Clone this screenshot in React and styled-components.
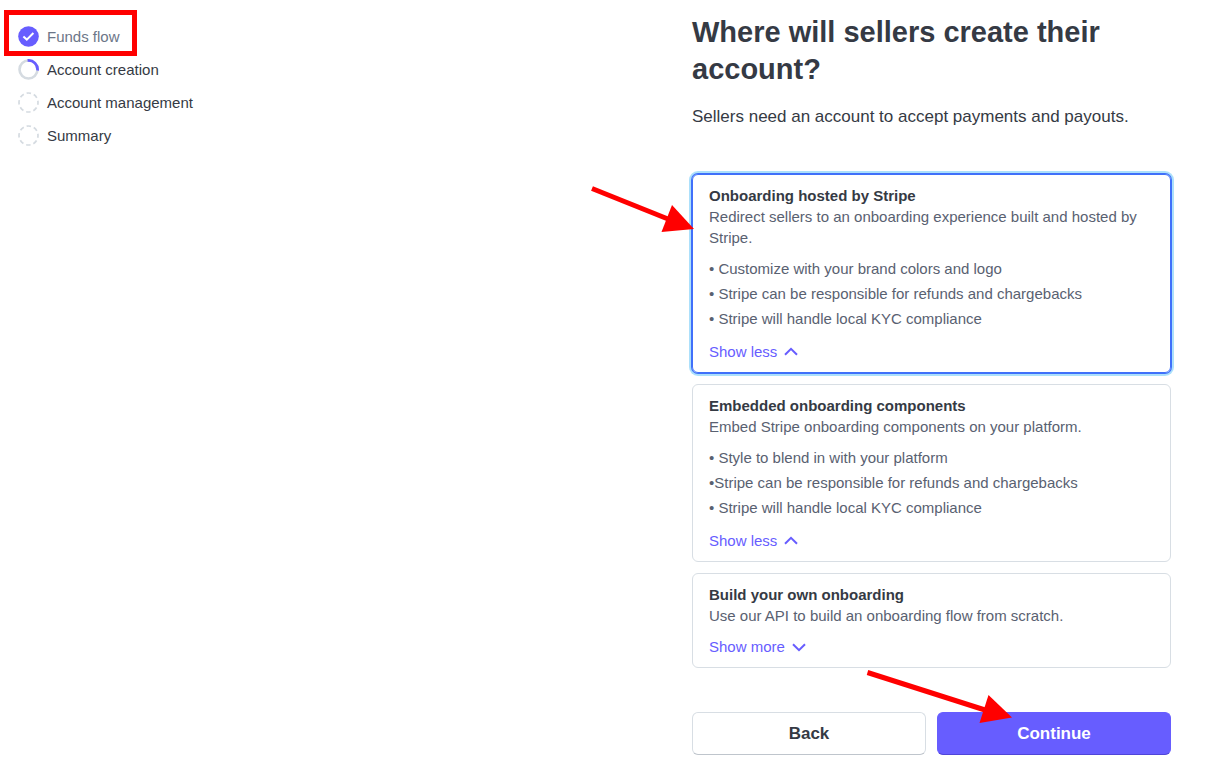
import { useState } from 'react';
import styled, { createGlobalStyle, css } from 'styled-components';

const steps = [
    {label: "Funds flow", status: "done"},
    {label: "Account creation", status: "current"},
    {label: "Account management", status: "todo"},
    {label: "Summary", status: "todo"},
];

const options = [
    {
        id: "hosted",
        title: "Onboarding hosted by Stripe",
        description: "Redirect sellers to an onboarding experience built and hosted by Stripe.",
        bullets: ["• Customize with your brand colors and logo", "• Stripe can be responsible for refunds and chargebacks", "• Stripe will handle local KYC compliance"],
    },
    {
        id: "embedded",
        title: "Embedded onboarding components",
        description: "Embed Stripe onboarding components on your platform.",
        bullets: ["• Style to blend in with your platform", "•Stripe can be responsible for refunds and chargebacks", "• Stripe will handle local KYC compliance"],
    },
    {
        id: "custom",
        title: "Build your own onboarding",
        description: "Use our API to build an onboarding flow from scratch.",
        bullets: ["• Full control over the onboarding experience"],
    },
];

function StepIcon({ status }) {
    if(status === "done"){
        return (
            <Icon viewBox="0 0 21 21" aria-hidden="true">
                <circle cx="10.5" cy="10.5" r="10.3" fill="#675dff" />
                <path d="M5.4 10.4 L8.8 13.6 L15.4 7" fill="none" stroke="white" strokeWidth="2" />
            </Icon>
        )
    }
    if(status === "current"){
        return (
            <Icon viewBox="0 0 21 21" aria-hidden="true">
                <circle cx="10.5" cy="10.5" r="9" fill="none" stroke="#d5dbe1" strokeWidth="2.6" />
                <path d="M9.6 1.5 A9 9 0 0 1 19.5 11.5" fill="none" stroke="#675dff" strokeWidth="2.8" />
            </Icon>
        )
    }
    return (
        <Icon viewBox="0 0 21 21" aria-hidden="true">
            <circle cx="10.5" cy="10.5" r="9.5" fill="none" stroke="#d5dbe1" strokeWidth="1.7" strokeDasharray="4.46 3" strokeDashoffset="2.2" />
        </Icon>
    )
}

function OptionCard({ option, selected, expanded, onSelect, onToggle, children }) {
    return (
        <Card $selected={selected}>
            <Radio
                type="radio"
                name="onboarding"
                id={option.id}
                checked={selected}
                onChange={onSelect}
            />
            <label htmlFor={option.id}>
                <CardTitle>{option.title}</CardTitle>
                <CardText>{option.description}</CardText>
            </label>
            {expanded &&
                <Bullets>
                    {option.bullets.map(text => <li key={text}>{text}</li>)}
                </Bullets>
            }
            <Toggle type="button" aria-expanded={expanded} onClick={onToggle}>
                {expanded ? "Show less" : "Show more"}
                <Chevron viewBox="0 0 14 14" aria-hidden="true">
                    <path d={expanded ? "M1 9.8 L7 3.8 L13 9.8" : "M1 4.2 L7 10.2 L13 4.2"} />
                </Chevron>
            </Toggle>
            {children}
        </Card>
    )
}

export default function App() {
    const [ selected, setSelected ] = useState("hosted");
    const [ expanded, setExpanded ] = useState(["hosted", "embedded"]);

    function toggle(id) {
        if(expanded.includes(id)){
            setExpanded(expanded.filter((item) => item !== id));
        }else{
            setExpanded([...expanded, id]);
        }
    }

    return (
        <>
            <GlobalStyle />
            <Page>
                <Steps>
                    {steps.map(step => (
                        <Step key={step.label} $done={step.status === "done"}>
                            <StepIcon status={step.status} />
                            {step.label}
                            {step.status === "done" && <Highlight />}
                        </Step>
                    ))}
                </Steps>
                <main>
                    <Title>Where will sellers create their account?</Title>
                    <Subtitle>Sellers need an account to accept payments and payouts.</Subtitle>
                    <Cards>
                        {options.map(option => (
                            <OptionCard
                                key={option.id}
                                option={option}
                                selected={selected === option.id}
                                expanded={expanded.includes(option.id)}
                                onSelect={() => setSelected(option.id)}
                                onToggle={() => toggle(option.id)}
                            >
                                {option.id === "hosted" &&
                                    <CardArrow viewBox="0 0 104 48" aria-hidden="true">
                                        <path d="M2 4.5 L78 35" />
                                        <polygon points="82,21 104,45 71.5,48" />
                                    </CardArrow>
                                }
                            </OptionCard>
                        ))}
                    </Cards>
                    <Actions>
                        <Button type="button">Back</Button>
                        <Button type="button" $primary>
                            Continue
                            <ButtonArrow viewBox="0 0 146 54" aria-hidden="true">
                                <path d="M1.5 3.5 L119 41" />
                                <polygon points="122.5,26 146,48.5 113.5,54" />
                            </ButtonArrow>
                        </Button>
                    </Actions>
                </main>
            </Page>
        </>
    )
}

const GlobalStyle = createGlobalStyle`
    * {
        box-sizing: border-box;
    }
    body {
        margin: 0;
        background-color: white;
        font-family: "Liberation Sans", Arial, sans-serif;
        font-size: 15px;
        line-height: 21px;
        color: #353a44;
    }
    button {
        font-family: inherit;
        cursor: pointer;
    }
`
const Page = styled.div`
    display: grid;
    grid-template-columns: minmax(0, 674fr) minmax(0, 479fr);
    padding: 14px 57px 27px 18px;
`
const Steps = styled.ol`
    display: flex;
    flex-direction: column;
    align-items: flex-start;
    gap: 12px;
    margin: 0;
    padding: 12px 0 0;
    list-style: none;
`
const Step = styled.li`
    position: relative;
    display: flex;
    align-items: center;
    gap: 8px;
    color: ${props => props.$done ? "#6c7688" : "#353a44"};
`
const Icon = styled.svg`
    width: 21px;
    height: 21px;
    flex-shrink: 0;
`
const Highlight = styled.span`
    position: absolute;
    inset: -16px -17px -9px -14px;
    border: 5px solid #ff0000;
    pointer-events: none;
`
const Title = styled.h1`
    margin: 0;
    font-size: 29px;
    font-weight: 700;
    line-height: 37px;
`
const Subtitle = styled.p`
    margin: 17px 0 0;
    font-size: 17px;
    line-height: 24px;
`
const Cards = styled.div`
    display: flex;
    flex-direction: column;
    gap: 11px;
    margin-top: 45px;
`
const Card = styled.div`
    position: relative;
    padding: 10px 16px;
    border: 1px solid #d8dee4;
    border-radius: 6px;
    ${props => props.$selected && css`
        border-color: #4070fa;
        box-shadow: 0 0 0 1px #4070fa, 0 0 0 3px #ace0fb;
    `}
`
const Radio = styled.input`
    position: absolute;
    opacity: 0;
    pointer-events: none;
`
const CardTitle = styled.span`
    display: block;
    font-weight: 700;
`
const CardText = styled.span`
    display: block;
    color: #596171;
`
const Bullets = styled.ul`
    margin: 8px 0 0;
    padding: 0;
    list-style: none;
    line-height: 25px;
    color: #596171;
`
const Toggle = styled.button`
    display: flex;
    align-items: center;
    gap: 7px;
    margin-top: 10px;
    padding: 0;
    border: none;
    background: none;
    font-size: 15px;
    line-height: 21px;
    color: #675dff;
`
const Chevron = styled.svg`
    width: 14px;
    height: 14px;
    fill: none;
    stroke: currentColor;
    stroke-width: 2;
`
const Arrow = styled.svg`
    position: absolute;
    pointer-events: none;
    fill: #ff0000;

    path {
        stroke: #ff0000;
        stroke-width: 5;
    }
`
const CardArrow = styled(Arrow)`
    top: 9px;
    right: calc(100% - 1px);
    width: 104px;
    height: 48px;
`
const Actions = styled.div`
    display: grid;
    grid-template-columns: 1fr 1fr;
    gap: 11px;
    margin-top: 44px;
`
const Button = styled.button`
    position: relative;
    height: 43px;
    border: 1px solid ${props => props.$primary ? "#675dff" : "#d8dee4"};
    border-bottom-color: ${props => props.$primary ? "#5046d8" : "#bfc5cc"};
    border-radius: 6px;
    background-color: ${props => props.$primary ? "#675dff" : "white"};
    font-size: 17px;
    font-weight: 700;
    line-height: 24px;
    color: ${props => props.$primary ? "white" : "#353a44"};
`
const ButtonArrow = styled(Arrow)`
    right: calc(100% - 74px);
    bottom: 31px;
    width: 146px;
    height: 54px;
`
